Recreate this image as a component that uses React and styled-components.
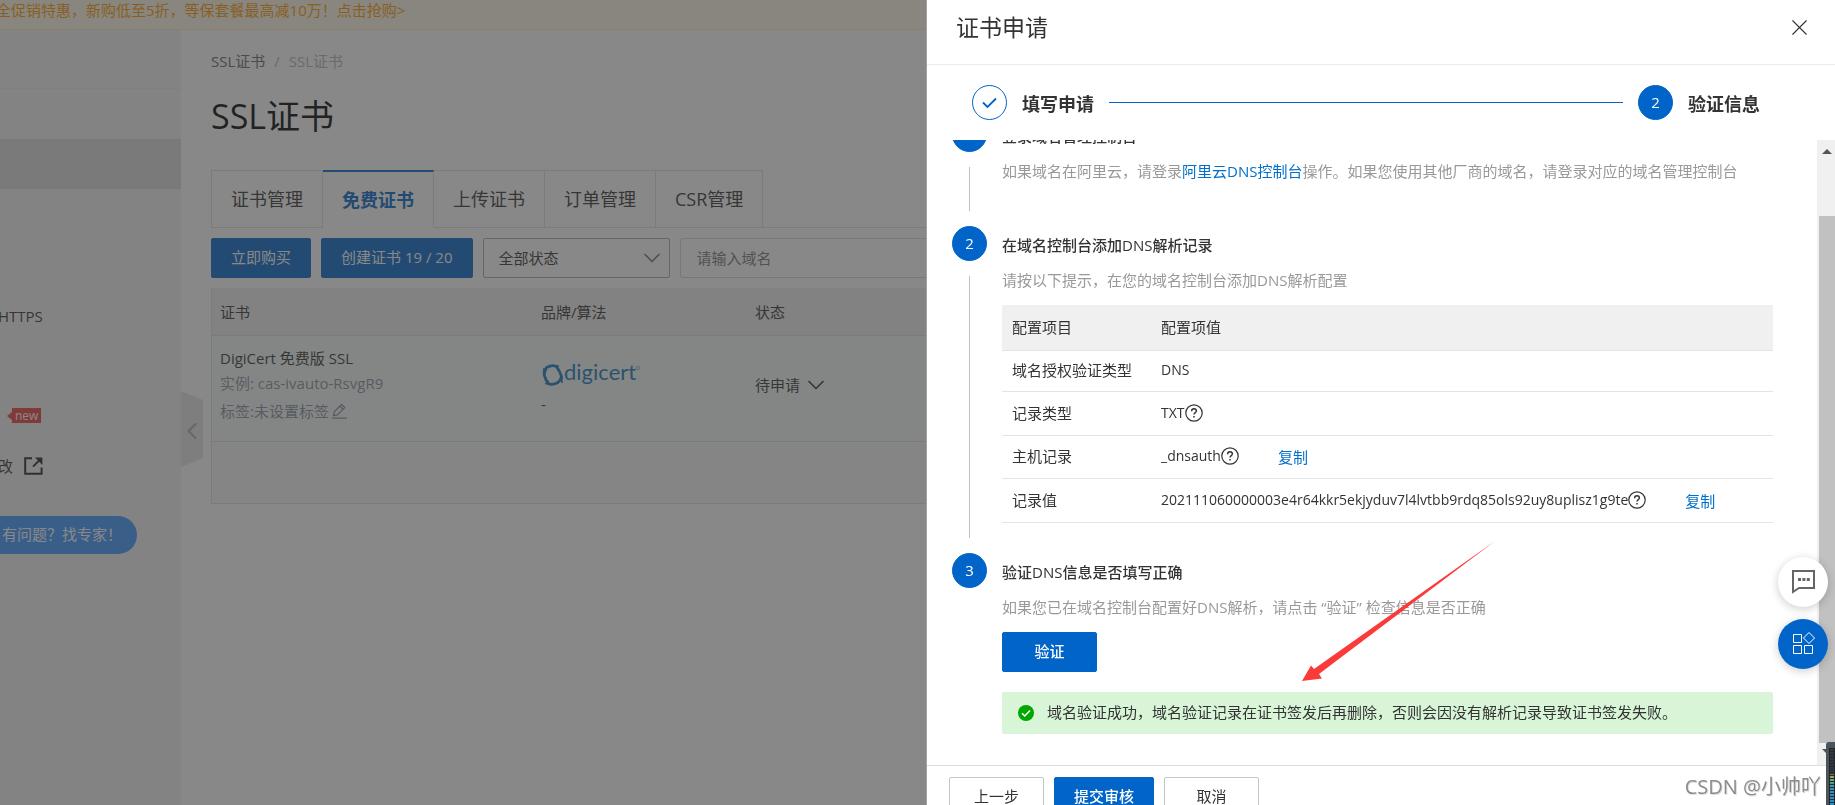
import React from "react";
import styled, { createGlobalStyle } from "styled-components";
import { ChevronDown, ChevronLeft, X } from "lucide-react";

const GlobalStyle = createGlobalStyle`
  * {
    box-sizing: border-box;
  }

  body {
    margin: 0;
    overflow: hidden;
    background: #fff;
    color: #333;
    font-family: "Open Sans", "Noto Sans CJK SC", sans-serif;
    font-size: 15px;
    line-height: 22px;
  }

  button, input, select {
    font: inherit;
    color: inherit;
  }
`

const Page = styled.div`
  display: flex;
  flex-direction: column;
  height: 100vh;
  overflow: hidden;
`

const Banner = styled.div`
  height: 30px;
  margin-left: -4px;
  border-bottom: 1px solid #fff1b8;
  background: #fffbe6;
  color: #ff9a00;
  line-height: 20px;
  white-space: nowrap;
`

const Columns = styled.div`
  display: flex;
  flex: 1;
  min-height: 0;
`

const Sidebar = styled.nav`
  flex: 0 0 181px;
  background: #f3f3f3;
  white-space: nowrap;
  overflow: hidden;
`

const SideHeader = styled.div`
  height: 59px;
  border-bottom: 1px solid #e8e8e8;
`

const SideItem = styled.div`
  display: flex;
  align-items: center;
  gap: 11px;
  height: 50px;
  margin-left: -2px;
  padding-top: 3px;
  background: ${props => (props.$active ? "#dcdcdc" : "transparent")};
`

const NewBadge = styled.span`
  position: relative;
  margin-left: 14px;
  padding: 0 3px;
  background: #ec3c3c;
  color: #fff;
  font-size: 12px;
  line-height: 15px;

  &::before {
    content: "";
    position: absolute;
    left: -5px;
    top: 4px;
    border: 4px solid transparent;
    border-left: 0;
    border-right: 5px solid #ec3c3c;
  }
`

const ExpertButton = styled.button`
  height: 38px;
  margin-top: 27px;
  padding: 0 15px 2px 2px;
  border: 0;
  border-radius: 0 19px 19px 0;
  background: #3a98ff;
  color: #fff;
`

const Collapse = styled.button`
  display: flex;
  align-items: center;
  justify-content: center;
  align-self: flex-start;
  flex: 0 0 22px;
  min-width: 0;
  height: 76px;
  margin-top: 361px;
  padding: 4px 0 0;
  border: 0;
  background: #e6e6e6;
  color: #aaa;
  clip-path: polygon(0 0, 100% 12%, 100% 88%, 0 100%);

  svg {
    flex-shrink: 0;
  }
`

const Main = styled.main`
  flex: 1;
  min-width: 0;
  padding: 20px 30px 0 8px;
`

const Breadcrumb = styled.div`
  display: flex;
  gap: 9px;
  color: #b4b4b4;

  a {
    color: #666;
    text-decoration: none;
  }
`

const PageTitle = styled.h1`
  margin: 20px 0 30px;
  font-size: 34px;
  font-weight: 400;
  line-height: 48px;
  color: #000;
`

const Tabs = styled.div`
  display: flex;
  height: 58px;
  box-shadow: inset 0 -1px #dedede;
`

const Tab = styled.button`
  padding: 0 19px;
  border: 1px solid #dedede;
  border-left-width: ${props => (props.$first ? "1px" : "0")};
  background: #fff;
  font-size: 18px;

  ${props => props.$active && `
    border-top: 2px solid #0064c8;
    border-bottom-color: #fff;
    color: #0064c8;
    font-weight: 700;
  `}
`

const Toolbar = styled.div`
  display: flex;
  gap: 10px;
  padding: 10px 0;
`

const Button = styled.button`
  height: 40px;
  min-width: 95px;
  padding: 0 19px 2px;
  border: 1px solid ${props => (props.$primary ? "#0064c8" : "#c0c6cc")};
  border-radius: 2px;
  background: ${props => (props.$primary ? "#0064c8" : "#fff")};
  color: ${props => (props.$primary ? "#fff" : "#333")};
  font-weight: ${props => (props.$strong ? "500" : "400")};
  white-space: nowrap;
`

const SelectBox = styled.label`
  position: relative;
  flex: 0 0 187px;

  select {
    width: 100%;
    height: 40px;
    padding: 0 15px;
    appearance: none;
    border: 1px solid #aaa;
    border-radius: 2px;
    background: #fff;
  }

  svg {
    position: absolute;
    right: 4px;
    top: 6px;
    color: #777;
  }
`

const SearchInput = styled.input`
  flex: 1;
  min-width: 0;
  height: 40px;
  padding: 0 16px;
  border: 1px solid #d8d8d8;
  border-radius: 2px;
  background: #fff;

  &::placeholder {
    color: #777;
    opacity: 1;
  }
`

const CertTable = styled.table`
  width: 100%;
  border-spacing: 0;
  border: 1px solid #dedede;
  border-top: 0;
  table-layout: fixed;
  background: #f7f7f7;

  th, td {
    padding: 0 8px;
    border-bottom: 1px solid #dedede;
    text-align: left;
    font-weight: 400;
  }

  th {
    height: 48px;
    background: #f0f0f0;
  }

  td {
    height: 106px;
    background: #f3fbf7;
  }

  tfoot td {
    height: 61px;
    border-bottom: 0;
    background: #f7f7f7;
  }
`

const Muted = styled.div`
  display: flex;
  align-items: center;
  gap: 3px;
  margin-top: ${props => (props.$spaced ? "6px" : "3px")};
  color: #8590a0;
`

const CertName = styled.div`
  margin-top: -8px;
`

const Status = styled.div`
  display: flex;
  align-items: center;
  gap: 2px;
  padding-bottom: 8px;
`

const Mask = styled.div`
  position: fixed;
  inset: 0;
  background: rgba(57, 57, 57, 0.6);
`

const Drawer = styled.section`
  position: fixed;
  top: 0;
  right: 0;
  bottom: 0;
  display: flex;
  flex-direction: column;
  width: 908px;
  max-width: 100%;
  background: #fff;
  box-shadow: -1px 0 #a2a2a2;
`

const DrawerHeader = styled.header`
  display: flex;
  align-items: center;
  justify-content: space-between;
  height: 65px;
  padding: 0 22px 10px 29px;
  border-bottom: 1px solid #ebebeb;

  h2 {
    margin: 0;
    font-size: 23px;
    font-weight: 400;
    line-height: 32px;
  }

  button {
    display: flex;
    padding: 0;
    border: 0;
    background: none;
  }
`

const Steps = styled.div`
  display: flex;
  align-items: center;
  gap: 15px;
  height: 75px;
  padding: 0 75px 0 45px;
`

const StepLabel = styled.strong`
  padding-top: 2px;
  font-size: 18px;
  line-height: 24px;
`

const StepLine = styled.div`
  flex: 1;
  height: 1px;
  background: #0064c8;
`

const Circle = styled.span`
  display: flex;
  flex: 0 0 35px;
  align-items: center;
  justify-content: center;
  width: 35px;
  height: 35px;
  padding-bottom: ${props => (props.$done ? "0" : "2px")};
  border: 1px solid #0064c8;
  border-radius: 50%;
  background: ${props => (props.$done ? "#fff" : "#0064c8")};
  color: ${props => (props.$done ? "#0064c8" : "#fff")};
`

const DrawerBody = styled.div`
  display: flex;
  flex: 1;
  min-height: 0;
  overflow: hidden;
`

// the list is scrolled a little, so the first step is cut by the top edge
const Timeline = styled.ol`
  flex: 1;
  min-width: 0;
  margin: -23px 0 0;
  padding: 0 44px 0 25px;
  list-style: none;
`

const TimelineItem = styled.li`
  display: flex;
  gap: 15px;
`

const Rail = styled.div`
  display: flex;
  flex-direction: column;
  align-items: center;
  gap: 15px;
  padding-bottom: 15px;
`

const RailLine = styled.div`
  flex: 1;
  width: 1px;
  background: #c0c0c0;
`

const StepContent = styled.div`
  flex: 1;
  min-width: 0;
  padding-bottom: 30px;

  h3 {
    margin: 0;
    font-size: 15px;
    font-weight: 500;
    line-height: 39px;
  }

  p {
    margin: 0 0 9px;
    line-height: 31px;
    color: #999;
  }
`

const Link = styled.a`
  color: #0070cc;
  text-decoration: none;
`

const RecordTable = styled.table`
  width: 100%;
  border-spacing: 0;

  th, td {
    height: 44px;
    padding: 0 10px 2px;
    border-bottom: 1px solid #e3e4e6;
    text-align: left;
    font-weight: 400;
  }

  th:first-child {
    width: 149px;
  }

  thead th {
    height: 46px;
    background: #f0f0f0;
  }

  tbody tr:nth-child(1) > td {
    height: 41px;
  }

  tbody tr:nth-child(3) > td {
    height: 43px;
  }
`

const RecordValue = styled.div`
  display: flex;
  align-items: center;
  font-size: 14px;

  a {
    margin-left: 39px;
    padding-top: 2px;
    font-size: 15px;
  }
`

const Notice = styled.div`
  display: flex;
  align-items: center;
  gap: 13px;
  height: 42px;
  margin-top: 20px;
  padding: 0 16px;
  border-radius: 2px;
  background: #d8f5d8;

  span {
    padding-bottom: 2px;
  }
`

const Scrollbar = styled.div`
  display: flex;
  flex-direction: column;
  align-items: center;
  width: 18px;
  padding: 9px 0 11px 2px;
  background: #f0f0f0;
`

const Arrow = styled.span`
  border: 5px solid transparent;
  ${props => (props.$down ? "border-bottom: 0; border-top-color: #555;" : "border-top: 0; border-bottom-color: #555;")}
`

const Thumb = styled.div`
  flex: 1;
  width: 100%;
  margin: 62px 0 6px;
  background: #c1c1c1;
`

const DrawerFooter = styled.footer`
  display: flex;
  flex: 0 0 40px;
  gap: 10px;
  padding: 11px 22px;
  border-top: 1px solid #dedede;
  overflow: hidden;
`

const FloatMenu = styled.div`
  position: fixed;
  right: 7px;
  bottom: 136px;
  display: flex;
  flex-direction: column;
  gap: 12px;
`

const FloatButton = styled.button`
  display: flex;
  align-items: center;
  justify-content: center;
  width: 50px;
  height: 50px;
  padding: 0;
  border: 0;
  border-radius: 50%;
  background: ${props => (props.$primary ? "#0064c8" : "#fff")};
  box-shadow: 0 2px 10px rgba(0, 0, 0, 0.2);
`

const ArrowMark = styled.svg`
  position: fixed;
  right: 338px;
  bottom: 121px;
  pointer-events: none;
`

const Watermark = styled.div`
  position: fixed;
  right: 14px;
  bottom: 3px;
  font-size: 20px;
  line-height: 30px;
  color: #8c8c8c;
  text-shadow: 1px 1px #ddd;
`

const Meter = styled.div`
  position: fixed;
  right: 0;
  bottom: 0;
  width: 9px;
  height: 63px;
  padding: 6px 0 0 3px;
  border-radius: 3px 0 0 0;
  background: #4b545b;
`

const MeterBar = styled.div`
  height: 57px;
  border: 1px solid #20262b;
  border-bottom: 0;
  background:
    repeating-linear-gradient(transparent 0 2px, #262b33 2px 3px),
    linear-gradient(#333840 0 25px, #a4b04a 26px, #4aa088 34px, #2a8fc4 44px);
`

const HelpIcon = () => (
  <svg width="18" height="18" viewBox="0 0 18 18" fill="none" stroke="#333" strokeWidth="1.2">
    <circle cx="9" cy="9" r="8.2" />
    <path d="M6.6 7.2C6.6 5.6 7.6 4.8 9 4.8S11.4 5.7 11.4 7C11.4 8.6 9 8.7 9 10.6" strokeWidth="1.4" />
    <path d="M9 12V13.6" strokeWidth="1.5" />
  </svg>
)

const ExternalIcon = () => (
  <svg width="19" height="18" viewBox="0 0 19 18" fill="none" stroke="#222" strokeWidth="2">
    <path d="M8 1.2H1.2V16.8H17.6V10.5M9 9.6L16 2.6" />
    <path d="M11 0.6H18.4V8Z" fill="#222" stroke="none" />
  </svg>
)

const EditIcon = () => (
  <svg width="15" height="16" viewBox="0 0 15 16" fill="none" stroke="#8590a0" strokeWidth="1.3">
    <path d="M1.5 12.5L2.2 8.8L9.6 1.4L12.8 4.6L5.4 12L1.5 12.5ZM8 3.2L11 6.2M0 15.2H15" />
  </svg>
)

const DigicertLogo = () => (
  <svg width="100" height="25" viewBox="0 0 100 25">
    <g fill="none" stroke="#1478be" strokeWidth="2.8" strokeLinejoin="round">
      <path d="M5.5 4.5Q11 1.5 15 3.2Q19 8 20.5 13.5Q19.5 17.5 17 19.5Q12 22 8 21Q4.5 17.5 3.2 12Q3.5 8 5.5 4.5Z" />
      <path d="M3 5L2.5 10M15 3.2L18 3M20.8 13L21 20M8 21L4 20.5" strokeWidth="1.6" />
    </g>
    <text x="23" y="17" fontSize="22" fontFamily="Lato, sans-serif" fill="#1478be">digicert</text>
    <circle cx="97" cy="5" r="1.6" fill="none" stroke="#1478be" strokeWidth="0.5" />
  </svg>
)

const tabs = ["证书管理", "免费证书", "上传证书", "订单管理", "CSR管理"]

const records = [
  { name: "域名授权验证类型", value: "DNS" },
  { name: "记录类型", value: "TXT", help: true },
  { name: "主机记录", value: "_dnsauth", help: true, copy: true },
  { name: "记录值", value: "202111060000003e4r64kkr5ekjyduv7l4lvtbb9rdq85ols92uy8uplisz1g9te", help: true, copy: true }
]

function Step({ number, title, last, children }) {
  return (
    <TimelineItem>
      <Rail>
        <Circle>{number}</Circle>
        {!last && <RailLine />}
      </Rail>
      <StepContent>
        <h3>{title}</h3>
        {children}
      </StepContent>
    </TimelineItem>
  )
}

function Certificates() {
  return (
    <Page>
      <Banner>全促销特惠，新购低至5折，等保套餐最高减10万！点击抢购&gt;</Banner>
      <Columns>
        <Sidebar>
          <SideHeader />
          <SideItem />
          <SideItem $active />
          <SideItem />
          <SideItem />
          <SideItem>HTTPS</SideItem>
          <SideItem />
          <SideItem><NewBadge>new</NewBadge></SideItem>
          <SideItem>改 <ExternalIcon /></SideItem>
          <ExpertButton>有问题？找专家！</ExpertButton>
        </Sidebar>
        <Collapse aria-label="收起"><ChevronLeft size={28} strokeWidth={1.8} /></Collapse>
        <Main>
          <Breadcrumb>
            <a href="#ssl">SSL证书</a>
            <span>/</span>
            <span>SSL证书</span>
          </Breadcrumb>
          <PageTitle>SSL证书</PageTitle>
          <Tabs>
            {tabs.map((tab, i) => (
              <Tab key={tab} $first={i === 0} $active={i === 1}>{tab}</Tab>
            ))}
          </Tabs>
          <Toolbar>
            <Button $primary>立即购买</Button>
            <Button $primary>创建证书 19 / 20</Button>
            <SelectBox>
              <select aria-label="状态"><option>全部状态</option></select>
              <ChevronDown size={28} strokeWidth={1.5} />
            </SelectBox>
            <SearchInput aria-label="域名" placeholder="请输入域名" />
          </Toolbar>
          <CertTable>
            <colgroup>
              <col width="321" />
              <col width="214" />
              <col />
            </colgroup>
            <thead>
              <tr><th>证书</th><th>品牌/算法</th><th>状态</th></tr>
            </thead>
            <tbody>
              <tr>
                <td>
                  <CertName>DigiCert 免费版 SSL</CertName>
                  <Muted>实例: cas-ivauto-RsvgR9</Muted>
                  <Muted $spaced>标签:未设置标签<EditIcon /></Muted>
                </td>
                <td>
                  <DigicertLogo />
                  <div>-</div>
                </td>
                <td><Status>待申请 <ChevronDown size={28} strokeWidth={1.5} /></Status></td>
              </tr>
            </tbody>
            <tfoot>
              <tr><td colSpan="3" /></tr>
            </tfoot>
          </CertTable>
        </Main>
      </Columns>
    </Page>
  )
}

function ApplyDrawer() {
  return (
    <Drawer>
      <DrawerHeader>
        <h2>证书申请</h2>
        <button aria-label="关闭"><X size={27} strokeWidth={1} /></button>
      </DrawerHeader>
      <Steps>
        <Circle $done>
          <svg width="15" height="12" viewBox="0 0 15 12" fill="none" stroke="#0064c8" strokeWidth="1.8">
            <path d="M1 5.5L5.5 10L14 1.5" />
          </svg>
        </Circle>
        <StepLabel>填写申请</StepLabel>
        <StepLine />
        <Circle>2</Circle>
        <StepLabel>验证信息</StepLabel>
      </Steps>
      <DrawerBody>
        <Timeline>
          <Step number={1} title="登录域名管理控制台">
            <p>
              如果域名在阿里云，请登录<Link href="#dns">阿里云DNS控制台</Link>操作。如果您使用其他厂商的域名，请登录对应的域名管理控制台
            </p>
          </Step>
          <Step number={2} title="在域名控制台添加DNS解析记录">
            <p>请按以下提示，在您的域名控制台添加DNS解析配置</p>
            <RecordTable>
              <thead>
                <tr><th>配置项目</th><th>配置项值</th></tr>
              </thead>
              <tbody>
                {records.map(record => (
                  <tr key={record.name}>
                    <td>{record.name}</td>
                    <td>
                      <RecordValue>
                        {record.value}
                        {record.help && <HelpIcon />}
                        {record.copy && <Link href="#copy">复制</Link>}
                      </RecordValue>
                    </td>
                  </tr>
                ))}
              </tbody>
            </RecordTable>
          </Step>
          <Step number={3} title="验证DNS信息是否填写正确" last>
            <p>如果您已在域名控制台配置好DNS解析，请点击 “验证” 检查信息是否正确</p>
            <Button $primary $strong>验证</Button>
            <Notice>
              <svg width="16" height="16" viewBox="0 0 16 16" fill="none">
                <circle cx="8" cy="8" r="8" fill="#00a700" />
                <path d="M4 8.2L6.8 11L12 5.6" stroke="#fff" strokeWidth="1.5" />
              </svg>
              <span>域名验证成功，域名验证记录在证书签发后再删除，否则会因没有解析记录导致证书签发失败。</span>
            </Notice>
          </Step>
        </Timeline>
        <Scrollbar>
          <Arrow />
          <Thumb />
          <Arrow $down />
        </Scrollbar>
      </DrawerBody>
      <DrawerFooter>
        <Button>上一步</Button>
        <Button $primary $strong>提交审核</Button>
        <Button>取消</Button>
      </DrawerFooter>
    </Drawer>
  )
}

export default function App() {
  return (
    <>
      <GlobalStyle />
      <Certificates />
      <Mask />
      <ApplyDrawer />
      <ArrowMark width="196" height="144" viewBox="0 0 196 144">
        <path d="M194 1L18 134L21 138.5L1 141L10 125.5L13 129Z" fill="#fb3a3a" />
      </ArrowMark>
      <FloatMenu>
        <FloatButton aria-label="咨询">
          <svg width="24" height="24" viewBox="0 0 24 24" fill="none" stroke="#666" strokeWidth="2">
            <path d="M2 1H23V18H8L2 22Z" />
            <path d="M7 9.5H19" strokeWidth="3" strokeDasharray="3 1.4" />
          </svg>
        </FloatButton>
        <FloatButton $primary aria-label="工具">
          <svg width="24" height="24" viewBox="0 0 24 24" fill="none" stroke="#fff" strokeWidth="1">
            <path d="M2.5 2.5H10.5V10.5H2.5ZM2.5 13.5H10.5V21.5H2.5ZM13.5 13.5H21.5V21.5H13.5ZM18 0.5L23.5 6L18 11.5L12.5 6Z" />
          </svg>
        </FloatButton>
      </FloatMenu>
      <Watermark>CSDN @小帅吖</Watermark>
      <Meter><MeterBar /></Meter>
    </>
  )
}
